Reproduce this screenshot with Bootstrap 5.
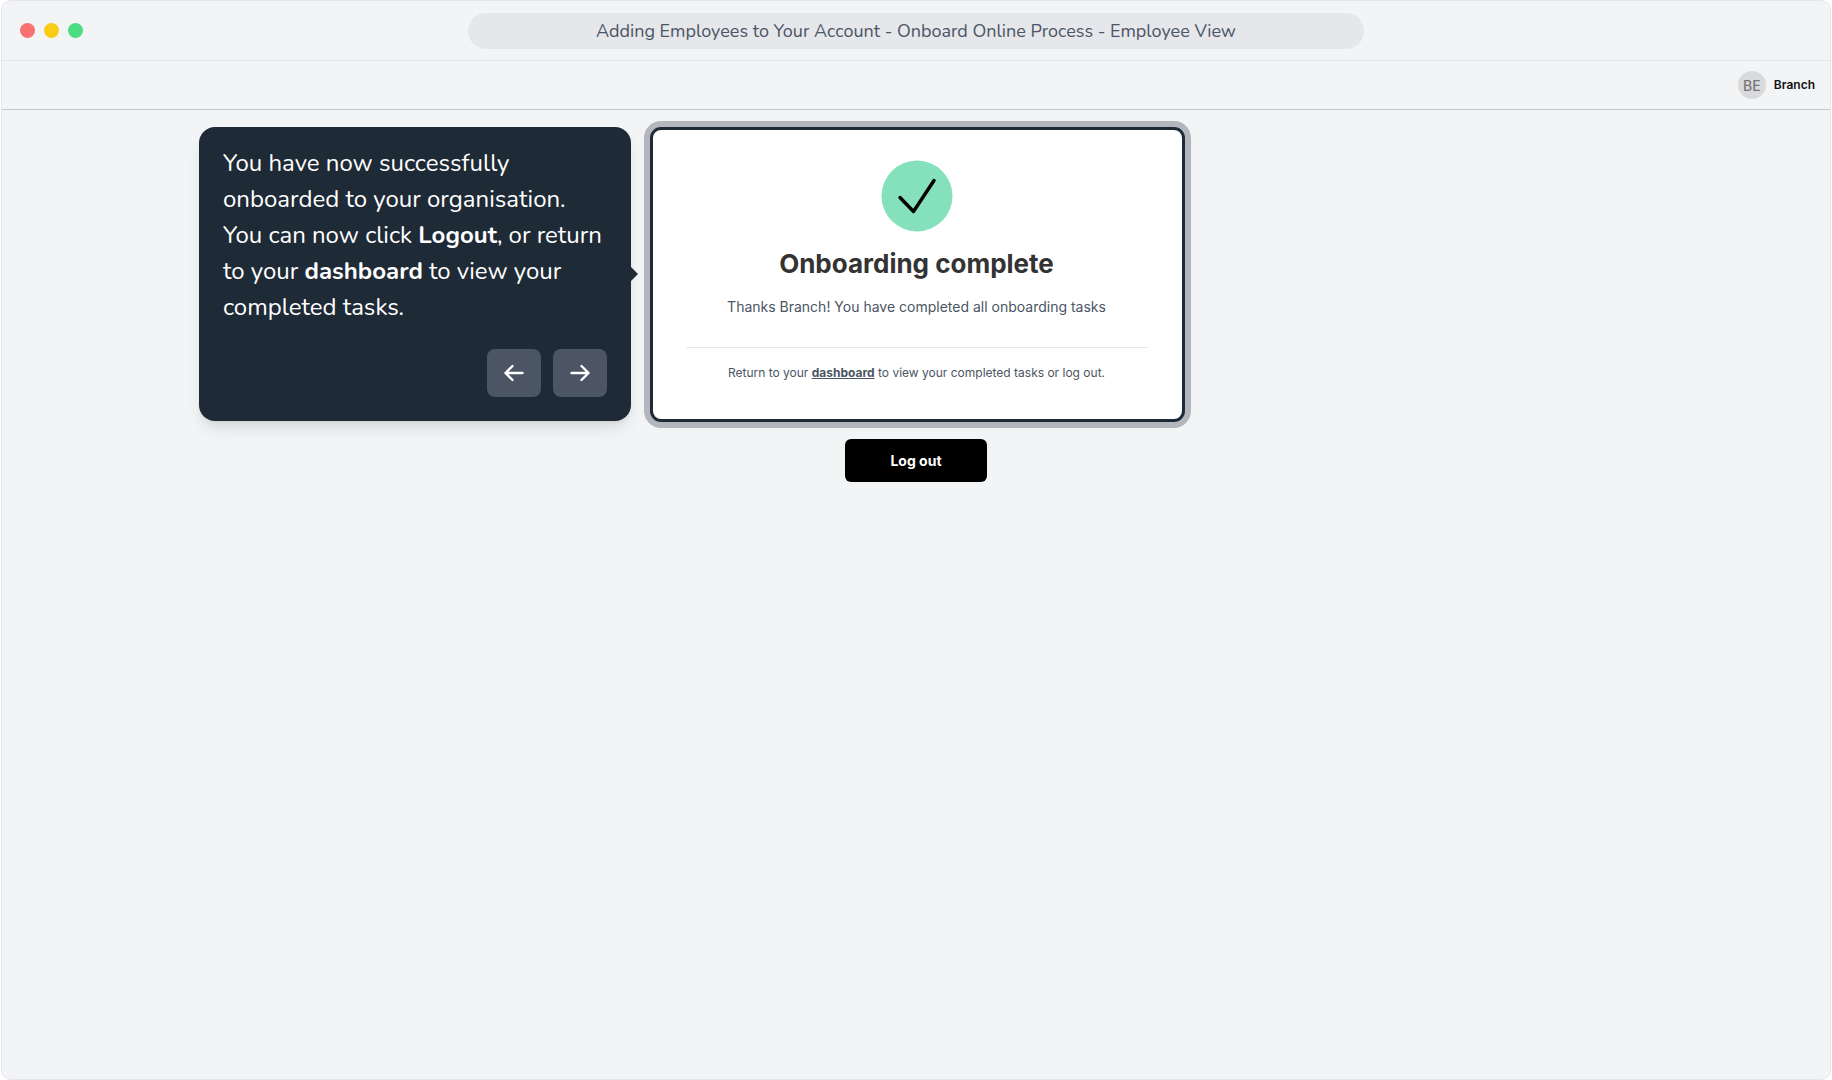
<!DOCTYPE html>
<html lang="en">
<head>
<meta charset="utf-8">
<meta name="viewport" content="width=device-width, initial-scale=1">
<title>Adding Employees to Your Account</title>
<link href="https://cdn.jsdelivr.net/npm/bootstrap@5.3.0/dist/css/bootstrap.min.css" rel="stylesheet">
<style>
  body { background: #fff; font-family: Inter, "Liberation Sans", sans-serif; color: #4b5563; }
  .frame { margin: 0 1px; border: 1px solid #e5e7eb; border-radius: 10px; background: #f3f4f6; }
  .titlebar { height: 60px; border-bottom: 1px solid #e5e7eb; padding: 0 18px; }
  .side { flex: 1 1 0; }
  .dots { gap: 9px; }
  .dot { width: 15px; height: 15px; }
  .dot-red { background: #f87171; }
  .dot-yellow { background: #facc15; }
  .dot-green { background: #4ade80; }
  .address { width: 896px; height: 36px; line-height: 36px; background: #e5e7eb; font-family: Nunito, Lato, sans-serif; font-size: 18px; color: #4b5563; }
  .userbar { height: 49px; border-bottom: 1px solid #c4c7ca; padding: 0 15px; }
  .avatar { width: 28px; height: 28px; background: #d9dadb; color: #777; font-size: 14px; }
  .username { font-size: 12px; color: #111; }
  .stage { display: grid; grid-template-columns: 1fr 535px 1fr; padding: 17px 0 0 3px; }
  .coach { width: 432px; margin-right: 19px; padding: 18px 24px 24px; border-radius: 16px; background: #1f2a37; color: #fff; font-family: Nunito, Lato, sans-serif; font-size: 24px; line-height: 36px; box-shadow: 0 10px 15px -3px rgba(0,0,0,.1), 0 4px 6px -4px rgba(0,0,0,.1); }
  .coach::after { content: ""; position: absolute; right: -7px; top: 50%; margin-top: -7px; border: 7px solid transparent; border-right: 0; border-left-color: #1f2a37; }
  .steps { gap: 12px; }
  .step { width: 54px; height: 48px; border-radius: 8px; background: #4b5563; --bs-btn-hover-bg: #6b7280; }
  .panel { border: 3px solid #1f2a37; border-radius: 11px; background: #fff; box-shadow: 0 0 0 6px #b3b6bc; padding: 30px 35px 36px 33px; }
  .panel h1 { font-size: 26px; line-height: 36px; color: #333; margin: 14px 0 13px; }
  .thanks { font-size: 14px; line-height: 24px; margin-bottom: 28px; }
  .return { font-size: 12px; line-height: 20px; border-top: 1px solid #e5e7eb; padding-top: 15px; }
  .return a { color: inherit; }
  .logout { width: 142px; height: 43px; border-radius: 6px; background: #000; font-size: 14px; margin: 17px 3px 0 0; --bs-btn-hover-bg: #222; }
</style>
<script src="https://cdn.jsdelivr.net/npm/bootstrap@5.3.0/dist/js/bootstrap.bundle.min.js"></script>
</head>
<body>
<div class="frame min-vh-100">
  <header class="titlebar d-flex align-items-center">
    <div class="side dots d-flex">
      <span class="dot dot-red rounded-circle"></span>
      <span class="dot dot-yellow rounded-circle"></span>
      <span class="dot dot-green rounded-circle"></span>
    </div>
    <div class="address rounded-pill text-center">Adding Employees to Your Account - Onboard Online Process - Employee View</div>
    <div class="side"></div>
  </header>
  <nav class="userbar d-flex align-items-center justify-content-end gap-2">
    <span class="avatar rounded-circle d-flex align-items-center justify-content-center fw-medium">BE</span>
    <span class="username fw-semibold">Branch</span>
  </nav>
  <main class="stage">
    <div class="d-flex justify-content-end align-items-start">
      <section class="coach position-relative">
        <p class="mb-4">You have now successfully onboarded to your organisation.<br>You can now click <strong>Logout</strong>, or return to your <strong>dashboard</strong> to view your completed tasks.</p>
        <div class="steps d-flex justify-content-end">
          <button type="button" class="btn step p-0 d-flex align-items-center justify-content-center" aria-label="Previous step">
            <svg width="20" height="18" viewBox="0 0 20 18" fill="none" stroke="#fff" stroke-width="2.4" stroke-linecap="round" stroke-linejoin="round"><path d="M18.500 9H1.500M8.500 2L1.500 9l7 7"/></svg>
          </button>
          <button type="button" class="btn step p-0 d-flex align-items-center justify-content-center" aria-label="Next step">
            <svg width="20" height="18" viewBox="0 0 20 18" fill="none" stroke="#fff" stroke-width="2.4" stroke-linecap="round" stroke-linejoin="round"><path d="M1.500 9h17M11.500 2l7 7-7 7"/></svg>
          </button>
        </div>
      </section>
    </div>
    <div class="d-flex flex-column">
      <section class="panel text-center">
        <svg class="d-block mx-auto" width="72" height="72" viewBox="0 0 72 72" fill="none"><circle cx="36" cy="36" r="35.500" fill="#84e1bc"/><path d="M19 37.500l13.500 14L53 20.500" stroke="#000" stroke-width="3.400" stroke-linecap="round" stroke-linejoin="round"/></svg>
        <h1 class="fw-bold">Onboarding complete</h1>
        <p class="thanks">Thanks Branch! You have completed all onboarding tasks</p>
        <p class="return mb-0">Return to your <a href="#" class="fw-bold">dashboard</a> to view your completed tasks or log out.</p>
      </section>
      <button type="button" class="btn btn-dark logout fw-bold border-0 align-self-center p-0">Log out</button>
    </div>
    <div></div>
  </main>
</div>
</body>
</html>
